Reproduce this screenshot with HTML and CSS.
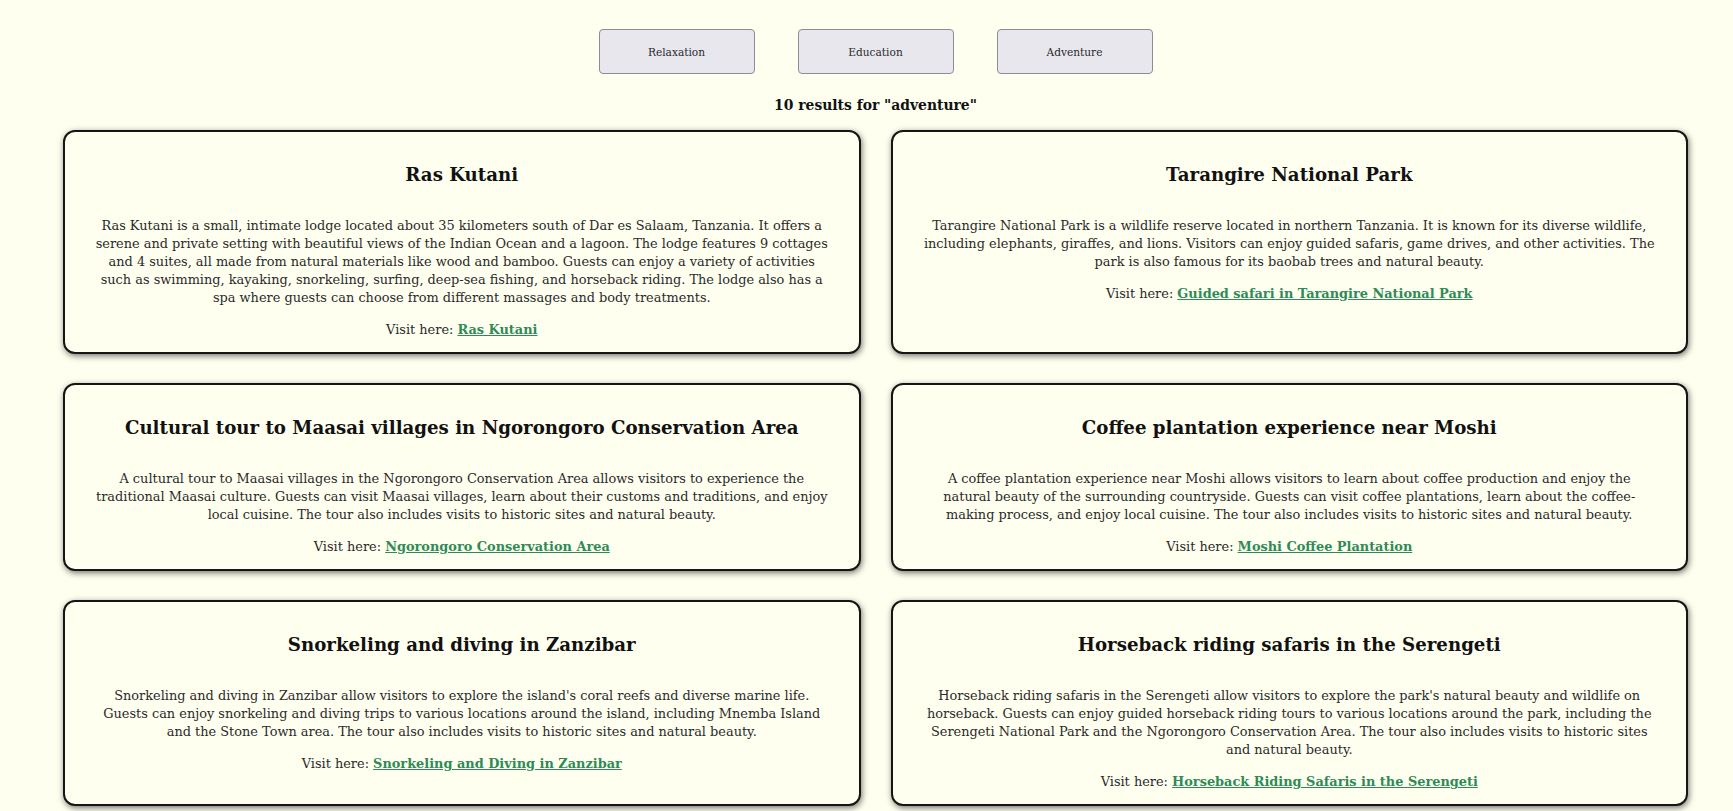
FILE: index.html
```html
<!DOCTYPE html>
<html lang="en">
<head>
<meta charset="utf-8">
<title>Search results</title>
<link rel="stylesheet" href="styles.css">
</head>
<body>
<div class="page">
  <div class="filters">
    <button class="filter-btn">Relaxation</button>
    <button class="filter-btn">Education</button>
    <button class="filter-btn">Adventure</button>
  </div>
  <p class="results-count">10 results for "adventure"</p>
  <div class="grid">
    <div class="card">
      <h2 class="card-title">Ras Kutani</h2>
      <p class="card-desc">Ras Kutani is a small, intimate lodge located about 35 kilometers south of Dar es Salaam, Tanzania. It offers a serene and private setting with beautiful views of the Indian Ocean and a lagoon. The lodge features 9 cottages and 4 suites, all made from natural materials like wood and bamboo. Guests can enjoy a variety of activities such as swimming, kayaking, snorkeling, surfing, deep-sea fishing, and horseback riding. The lodge also has a spa where guests can choose from different massages and body treatments.</p>
      <p class="card-visit">Visit here: <a href="#">Ras Kutani</a></p>
    </div>
    <div class="card">
      <h2 class="card-title">Tarangire National Park</h2>
      <p class="card-desc">Tarangire National Park is a wildlife reserve located in northern Tanzania. It is known for its diverse wildlife, including elephants, giraffes, and lions. Visitors can enjoy guided safaris, game drives, and other activities. The park is also famous for its baobab trees and natural beauty.</p>
      <p class="card-visit">Visit here: <a href="#">Guided safari in Tarangire National Park</a></p>
    </div>
    <div class="card">
      <h2 class="card-title">Cultural tour to Maasai villages in Ngorongoro Conservation Area</h2>
      <p class="card-desc">A cultural tour to Maasai villages in the Ngorongoro Conservation Area allows visitors to experience the traditional Maasai culture. Guests can visit Maasai villages, learn about their customs and traditions, and enjoy local cuisine. The tour also includes visits to historic sites and natural beauty.</p>
      <p class="card-visit">Visit here: <a href="#">Ngorongoro Conservation Area</a></p>
    </div>
    <div class="card">
      <h2 class="card-title">Coffee plantation experience near Moshi</h2>
      <p class="card-desc">A coffee plantation experience near Moshi allows visitors to learn about coffee production and enjoy the natural beauty of the surrounding countryside. Guests can visit coffee plantations, learn about the coffee-making process, and enjoy local cuisine. The tour also includes visits to historic sites and natural beauty.</p>
      <p class="card-visit">Visit here: <a href="#">Moshi Coffee Plantation</a></p>
    </div>
    <div class="card">
      <h2 class="card-title">Snorkeling and diving in Zanzibar</h2>
      <p class="card-desc">Snorkeling and diving in Zanzibar allow visitors to explore the island's coral reefs and diverse marine life. Guests can enjoy snorkeling and diving trips to various locations around the island, including Mnemba Island and the Stone Town area. The tour also includes visits to historic sites and natural beauty.</p>
      <p class="card-visit">Visit here: <a href="#">Snorkeling and Diving in Zanzibar</a></p>
    </div>
    <div class="card">
      <h2 class="card-title">Horseback riding safaris in the Serengeti</h2>
      <p class="card-desc">Horseback riding safaris in the Serengeti allow visitors to explore the park's natural beauty and wildlife on horseback. Guests can enjoy guided horseback riding tours to various locations around the park, including the Serengeti National Park and the Ngorongoro Conservation Area. The tour also includes visits to historic sites and natural beauty.</p>
      <p class="card-visit">Visit here: <a href="#">Horseback Riding Safaris in the Serengeti</a></p>
    </div>
  </div>
</div>
</body>
</html>
```

FILE: styles.css
```css
html {
  scrollbar-width: none;
}

body {
  margin: 0;
  background: #fffff0;
  font-family: "DejaVu Serif", "Liberation Serif", serif;
  color: #2a2a2a;
}

.page {
  padding-left: 18px;
  padding-bottom: 30px;
}

.filters {
  display: flex;
  justify-content: center;
  gap: 43px;
  padding-top: 29px;
}

.filter-btn {
  width: 156px;
  height: 45px;
  background: #e8e7ee;
  border: 1px solid #8c8b96;
  border-radius: 4px;
  font-family: "DejaVu Serif", "Liberation Serif", serif;
  font-size: 10.6px;
  color: #2a2a2a;
  padding: 0;
}

.results-count {
  margin: 21px 0 0;
  text-align: center;
  font-weight: bold;
  font-size: 13.9px;
  line-height: 20px;
  color: #111;
}

.grid {
  display: grid;
  grid-template-columns: 1fr 1fr;
  column-gap: 30px;
  row-gap: 29px;
  padding: 0 45px;
  margin-top: 15px;
}

.card {
  background: #fffff0;
  border: 2px solid #151515;
  border-radius: 12px;
  box-shadow: 1px 2px 6px rgba(0, 0, 0, 0.55);
  padding: 28px 30px 13px;
  text-align: center;
}

.card-title {
  margin: 0 0 27px;
  font-size: 18.2px;
  line-height: 30px;
  font-weight: bold;
  color: #111;
}

.card-desc {
  margin: 0 0 14px;
  font-size: 12.9px;
  line-height: 18px;
}

.card-visit {
  margin: 0;
  font-size: 12.9px;
  line-height: 18px;
}

.card-visit a {
  color: #2e8b57;
  font-weight: bold;
  text-decoration: underline;
}
```
